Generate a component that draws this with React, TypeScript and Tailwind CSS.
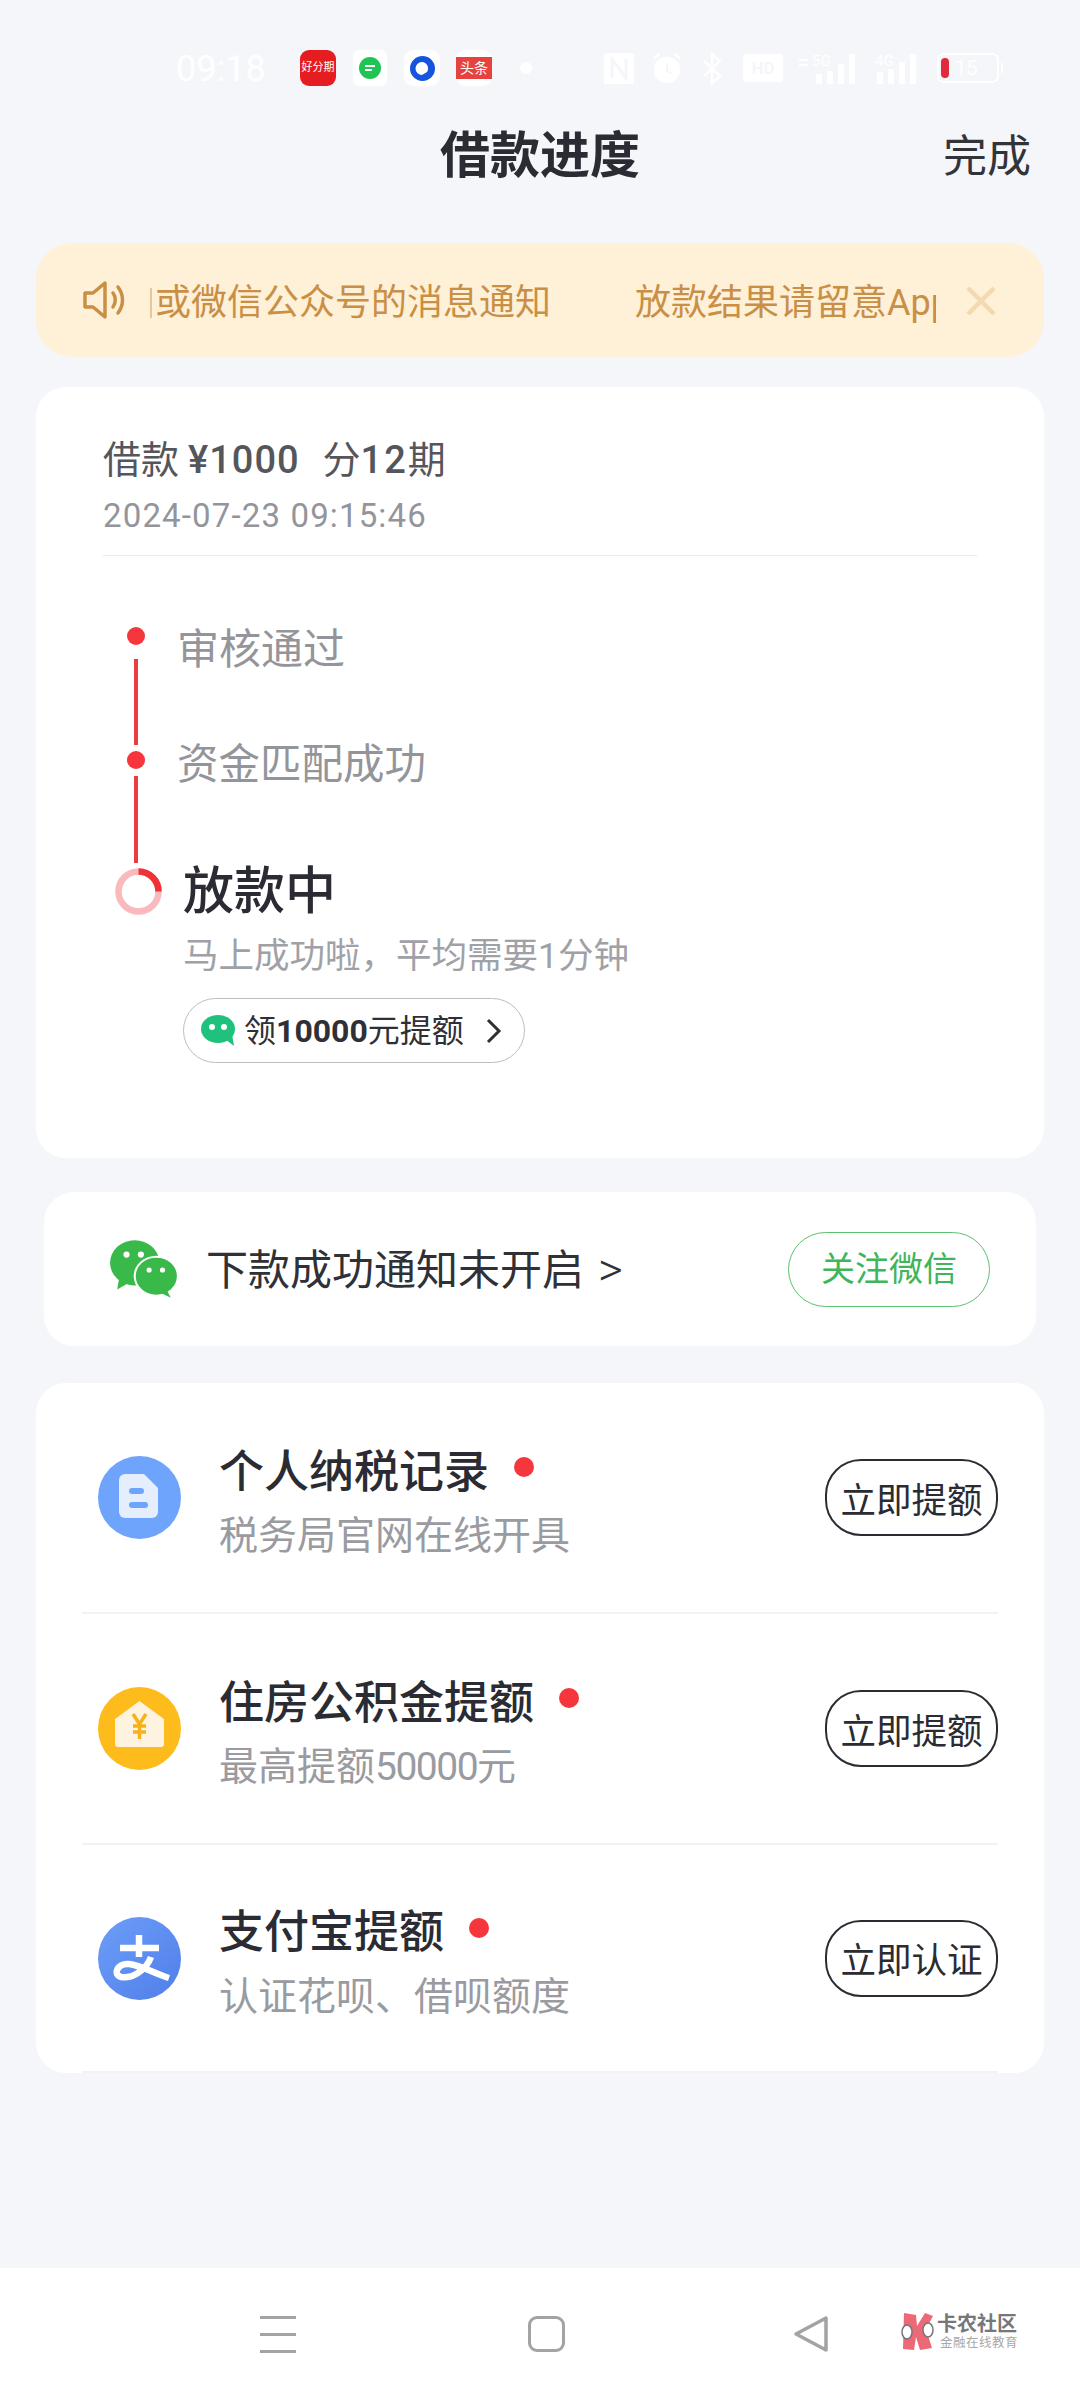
import React from 'react';

const rows = [
  { title: '个人纳税记录', sub: '税务局官网在线开具', action: '立即提额', icon: 'doc', height: 'h-[231px]' },
  { title: '住房公积金提额', sub: <>最高提额<span className="tracking-[-1.5px]">50000</span>元</>, action: '立即提额', icon: 'house', height: 'h-[231px]' },
  { title: '支付宝提额', sub: '认证花呗、借呗额度', action: '立即认证', icon: 'alipay', height: 'h-[228px]' },
];

const RowIcon: React.FC<{ kind: string }> = ({ kind }) => {
  if (kind === 'doc') {
    return (
      <svg width="83" height="83" viewBox="0 0 83 83">
        <circle cx="41.5" cy="41.5" r="41.5" fill="#6ea4fb" />
        <path d="M21 24a6 6 0 0 1 6-6h19l14 14v24a6 6 0 0 1-6 6H27a6 6 0 0 1-6-6z" fill="#e4eefc" />
        <rect x="31" y="32" width="15" height="6" rx="3" fill="#6ea4fb" />
        <rect x="31" y="46" width="19" height="6" rx="3" fill="#6ea4fb" />
      </svg>
    );
  }
  if (kind === 'house') {
    return (
      <svg width="83" height="83" viewBox="0 0 83 83">
        <circle cx="41.5" cy="41.5" r="41.5" fill="#fdbc1c" />
        <path d="M41.5 14 L17 32 V57 a3 3 0 0 0 3 3 H63 a3 3 0 0 0 3-3 V32 Z" fill="#fdf3de" />
        <path d="M35 27 L41.500 37 L48 27 M41.500 37 V52 M35 39 H48 M35 45 H48" stroke="#f5b21c" strokeWidth="3.500" fill="none" />
      </svg>
    );
  }
  return (
    <svg width="83" height="83" viewBox="0 0 83 83">
      <defs>
        <linearGradient id="alipayFill" x1="0" y1="0" x2="1" y2="1">
          <stop offset="0" stopColor="#6d9ef8" />
          <stop offset="1" stopColor="#4f7ee9" />
        </linearGradient>
      </defs>
      <circle cx="41.5" cy="41.5" r="41.5" fill="url(#alipayFill)" />
      <path d="M22 31H61M41 18V40M53 40C48 54 33 62 23 60C14 57 20 46 31 47C42 48 56 56 71 61" stroke="#fff" strokeWidth="6.500" fill="none" />
    </svg>
  );
};

const BubbleIcon: React.FC = () => (
  <svg width="34" height="31" viewBox="0 0 34 31">
    <ellipse cx="17" cy="14" rx="17" ry="14" fill="#1fc27c" />
    <path d="M24 24 L33 31 L31 19 Z" fill="#1fc27c" />
    <circle cx="11" cy="12" r="3" fill="#fff" />
    <circle cx="23" cy="12" r="3" fill="#fff" />
  </svg>
);

const WechatIcon: React.FC = () => (
  <svg width="72" height="58" viewBox="0 0 70 56">
    <ellipse cx="25" cy="22" rx="24" ry="22" fill="#38b94a" />
    <path d="M10 36 L8 48 L22 40 Z" fill="#38b94a" />
    <ellipse cx="46" cy="35" rx="22" ry="20" fill="#fff" />
    <ellipse cx="46" cy="35" rx="20" ry="18" fill="#38b94a" />
    <path d="M56 48 L60 56 L48 50 Z" fill="#38b94a" />
    <circle cx="17" cy="14" r="3" fill="#fff" />
    <circle cx="31" cy="14" r="3" fill="#fff" />
    <circle cx="39" cy="29" r="2.5" fill="#fff" />
    <circle cx="52" cy="29" r="2.5" fill="#fff" />
  </svg>
);

const StatusBar: React.FC = () => (
  <div className="h-[110px] pt-[26px] flex items-center pl-[176px]">
    <span className="w-[124px] pt-[2px] text-[36px] text-white/90 font-['Roboto',sans-serif]">09:18</span>
    <div className="w-9 h-9 rounded-[9px] bg-[#e51c20] flex items-center justify-center text-[11px] text-white whitespace-nowrap overflow-hidden">好分期</div>
    <div className="ml-[17px] w-[34px] h-9 rounded-[6px] bg-white flex items-center justify-center">
      <svg width="24" height="24" viewBox="0 0 24 24">
        <circle cx="12" cy="12" r="11" fill="#1fc455" />
        <path d="M7 10h10M7 14h7" stroke="#fff" strokeWidth="2" />
      </svg>
    </div>
    <div className="ml-[17px] w-9 h-9 rounded-[9px] bg-white flex items-center justify-center">
      <svg width="25" height="25" viewBox="0 0 25 25">
        <circle cx="12.5" cy="12.5" r="12.5" fill="#1554dc" />
        <path d="M12 6a6.500 6.500 0 1 0 0 13l5-3a6.500 6.500 0 0 0-5-10z" fill="#fff" />
      </svg>
    </div>
    <div className="ml-[16px] w-9 h-9 rounded-[9px] bg-white flex items-center justify-center">
      <div className="w-9 h-[22px] bg-[#e64340] flex items-center justify-center text-[14px] leading-none text-white">头条</div>
    </div>
    <div className="ml-[28px] w-3 h-3 rounded-full bg-white" />
    <div className="ml-[72px] flex items-center text-white">
      <svg width="30" height="31" viewBox="0 0 30 31">
        <rect width="30" height="31" rx="3" fill="#fff" />
        <path d="M8 25V6l14 19V6" stroke="#f5f6fa" strokeWidth="3" fill="none" />
      </svg>
      <svg className="ml-[18px]" width="30" height="34" viewBox="0 0 32 34">
        <circle cx="16" cy="19" r="14" fill="#fff" />
        <path d="M2 7l6-5M30 7l-6-5" stroke="#fff" strokeWidth="2.500" />
        <path d="M16 12v8l5 3" stroke="#f5f6fa" strokeWidth="2" fill="none" />
      </svg>
      <svg className="ml-[20px]" width="20" height="33" viewBox="0 0 20 33">
        <path d="M2 9l16 15-8 7V2l8 7L2 24" stroke="#fff" strokeWidth="2.500" fill="none" />
      </svg>
      <div className="ml-[21px] w-[40px] h-[28px] bg-white rounded-[4px] flex items-center justify-center text-[17px] font-bold leading-none text-[#f5f6fa]">HD</div>
      <svg className="ml-[15px]" width="59" height="32" viewBox="0 0 59 32">
        <path d="M1 8h9M1 13h9" stroke="#fff" strokeWidth="2" />
        <text x="14" y="14" fontSize="15" fill="#fff" fontFamily="Roboto">5G</text>
        <rect x="18" y="22" width="6" height="10" fill="#fff" />
        <rect x="29" y="19" width="6" height="13" fill="#fff" />
        <rect x="40" y="12" width="6" height="20" fill="#fff" />
        <rect x="51" y="2" width="6" height="30" fill="#fff" />
      </svg>
      <svg className="ml-[18px]" width="45" height="32" viewBox="0 0 45 32">
        <text x="0" y="14" fontSize="15" fill="#fff" fontFamily="Roboto">4G</text>
        <rect x="2" y="20" width="6" height="12" fill="#fff" />
        <rect x="13" y="17" width="6" height="15" fill="#fff" />
        <rect x="24" y="10" width="6" height="22" fill="#fff" />
        <rect x="35" y="2" width="6" height="30" fill="#fff" />
      </svg>
      <div className="ml-[17px] relative w-[62px] h-[30px] rounded-[7px] border-2 border-white flex items-center pl-[2px]">
        <div className="w-2 h-[20px] rounded-full bg-[#e02b3c]" />
        <span className="ml-[6px] text-[20px] leading-none text-white font-['Roboto',sans-serif]">15</span>
        <div className="absolute -right-[6px] w-[2px] h-[10px] bg-white" />
      </div>
    </div>
  </div>
);

const App: React.FC = () => {
  return (
    <div className="w-[1080px] h-[2400px] bg-[#f5f6fa] flex flex-col font-['Roboto','Noto_Sans_CJK_SC',sans-serif] overflow-hidden">
      <StatusBar />

      {/* Header */}
      <div className="relative h-[90px] flex items-center justify-center">
        <span className="pt-[3px] text-[50px] font-bold text-[#2b2c33]">借款进度</span>
        <span className="absolute right-[49px] pt-[3px] text-[44px] text-[#33343a]">完成</span>
      </div>

      {/* Notice */}
      <div className="mt-[43px] mx-[36px] h-[114px] rounded-[36px] bg-[#fff0d8] flex items-center pl-[46px] text-[#c98f45]">
        <svg width="44" height="44" viewBox="0 0 44 44" fill="none" stroke="#c98f45" strokeWidth="3.500" strokeLinejoin="round" strokeLinecap="round">
          <path d="M3 15h8l12-10v34L11 29H3z" />
          <path d="M31 15c3 4 3 10 0 14" />
          <path d="M36 9c6 8 6 18 0 26" />
        </svg>
        <div className="ml-[24px] w-[786px] pt-[5px] overflow-hidden flex items-center whitespace-nowrap text-[36px]">
          <span className="w-[2px] h-[30px] bg-[#e6c79b] shrink-0" />
          <span className="ml-[3px]">或微信公众号的消息通知</span>
          <span className="ml-[84px]">放款结果请留意App</span>
        </div>
        <svg className="ml-[28px] mt-[2px]" width="34" height="34" viewBox="0 0 34 34">
          <path d="M4 4l26 26M30 4L4 30" stroke="#f3d9af" strokeWidth="4.500" />
        </svg>
      </div>

      {/* Progress */}
      <div className="mt-[30px] mx-[36px] h-[771px] rounded-[30px] bg-white px-[67px] pt-[47px]">
        <div className="h-[50px] pt-[3px] flex items-center text-[38px] text-[#55565c]">
          <span>借款</span>
          <span className="ml-[9px] font-medium tracking-[1px]">¥1000</span>
          <span className="ml-[23px]">分<span className="font-medium tracking-[2px]">12</span>期</span>
        </div>
        <div className="mt-[11px] h-[40px] pt-[2px] flex items-center text-[33px] text-[#93959b] tracking-[1.15px]">2024-07-23 09:15:46</div>
        <div className="mt-[20px] border-b border-[#e8e9ec]" />

        <div className="mt-[71px] flex">
          <div className="w-[65px] flex flex-col items-center">
            <div className="w-[18px] h-[18px] rounded-full bg-[#f5363c]" />
            <div className="mt-[14px] w-1 h-[86px] bg-[#ea3d42]" />
            <div className="mt-[6px] w-[18px] h-[18px] rounded-full bg-[#f5363c]" />
            <div className="mt-[7px] w-1 h-[87px] bg-[#ea3d42]" />
            <svg className="mt-[5px] ml-[5px]" width="47" height="47" viewBox="0 0 47 47" fill="none" strokeWidth="6.500">
              <circle cx="23.500" cy="23.500" r="20" stroke="#fbb9bc" />
              <path d="M23.500 3.500a20 20 0 0 1 20 20" stroke="#ee3338" />
            </svg>
          </div>
          <div className="ml-[12px] flex flex-col">
            <div className="-ml-[3px] -mt-[4px] h-[50px] pt-[2px] flex items-center text-[42px] text-[#93959b]">审核通过</div>
            <div className="-ml-[3px] mt-[66px] h-[50px] pt-[3px] flex items-center text-[41.500px] text-[#93959b]">资金匹配成功</div>
            <div className="ml-[3px] mt-[71px] h-[60px] pt-[5px] flex items-center text-[51px] font-medium text-[#2b2c33]">放款中</div>
            <div className="ml-[3px] mt-[13px] h-[44px] pt-[3px] flex items-center text-[35.500px] text-[#a0a1a7]">马上成功啦，平均需要1分钟</div>
            <div className="ml-[3px] mt-[21px] w-[342px] h-[65px] rounded-full border-[1.5px] border-[#bdbec2] flex items-center pl-[17px] text-[32px] text-[#2f3036]">
              <BubbleIcon />
              <span className="ml-[9px]">领<span className="font-bold">10000</span>元提额</span>
              <svg className="ml-[22px]" width="16" height="26" viewBox="0 0 16 26" fill="none" stroke="#2f3036" strokeWidth="3">
                <path d="M2 2l11 11L2 24" />
              </svg>
            </div>
          </div>
        </div>
      </div>

      {/* WeChat notice */}
      <div className="mt-[34px] mx-[44px] h-[154px] rounded-[30px] bg-white flex items-center pl-[65px] pr-[46px]">
        <WechatIcon />
        <span className="ml-[25px] pt-[2px] text-[42px] text-[#303136]">下款成功通知未开启</span>
        <span className="ml-[14px] pt-[2px] text-[48px] font-light leading-none text-[#303136]">&gt;</span>
        <div className="ml-auto w-[202px] h-[75px] rounded-full border-[1.5px] border-[#5cc16f] flex items-center justify-center text-[34px] text-[#3fb55c]">关注微信</div>
      </div>

      {/* Credit options */}
      <div className="mt-[37px] mx-[36px] h-[690px] rounded-[30px] bg-white px-[46px]">
        {rows.map((row) => (
          <div key={row.title} className={`${row.height} border-b-2 border-[#f1f2f4] flex items-center pl-[16px]`}>
            <RowIcon kind={row.icon} />
            <div className="ml-[38px] flex flex-col">
              <div className="h-[60px] pt-[8px] flex items-center">
                <span className="text-[45px] font-medium text-[#2b2c33]">{row.title}</span>
                <span className="ml-[25px] -mt-[11px] w-5 h-5 rounded-full bg-[#f5363c]" />
              </div>
              <div className="mt-[8px] h-[50px] pt-[10px] flex items-center text-[39px] text-[#9a9ba1]">{row.sub}</div>
            </div>
            <div className="ml-auto w-[173px] h-[77px] pt-[8px] rounded-[36px] border-2 border-[#2b2c33] flex items-center justify-center text-[35.500px] text-[#2b2c33]">{row.action}</div>
          </div>
        ))}
      </div>

      {/* Nav bar */}
      <div className="mt-auto relative h-[132px] bg-white flex items-center">
        <div className="ml-[260px] w-9 flex flex-col gap-[14px]">
          <div className="h-[3px] bg-[#a3a3a3]" />
          <div className="h-[3px] bg-[#a3a3a3]" />
          <div className="h-[3px] bg-[#a3a3a3]" />
        </div>
        <div className="ml-[232px] w-[37px] h-[36px] rounded-[9px] border-[3px] border-[#a3a3a3]" />
        <svg className="ml-[228px]" width="36" height="38" viewBox="0 0 36 38" fill="none" stroke="#a3a3a3" strokeWidth="3.500" strokeLinejoin="round">
          <path d="M33 3v32L3 19z" />
        </svg>
        <div className="absolute left-[900px] top-[44px] flex items-center">
          <svg width="36" height="38" viewBox="0 0 36 38">
            <path d="M4 1l12 2 1 11L25 1l8 3-7 13 6 19-12 2-4-13-2 13-11-1z" fill="#ec6a78" />
            <ellipse cx="7" cy="20" rx="5" ry="7" fill="#fff" stroke="#777" strokeWidth="1.500" />
            <ellipse cx="28" cy="18" rx="5" ry="7" fill="#fff" stroke="#777" strokeWidth="1.500" />
          </svg>
          <div className="ml-[1px] flex flex-col">
            <span className="text-[20px] leading-[22px] font-bold text-[#777] whitespace-nowrap">卡农社区</span>
            <span className="ml-[3px] text-[12.500px] leading-[15px] text-[#a8a8a8] whitespace-nowrap tracking-[0.5px]">金融在线教育</span>
          </div>
        </div>
      </div>
    </div>
  );
};

export default App;
